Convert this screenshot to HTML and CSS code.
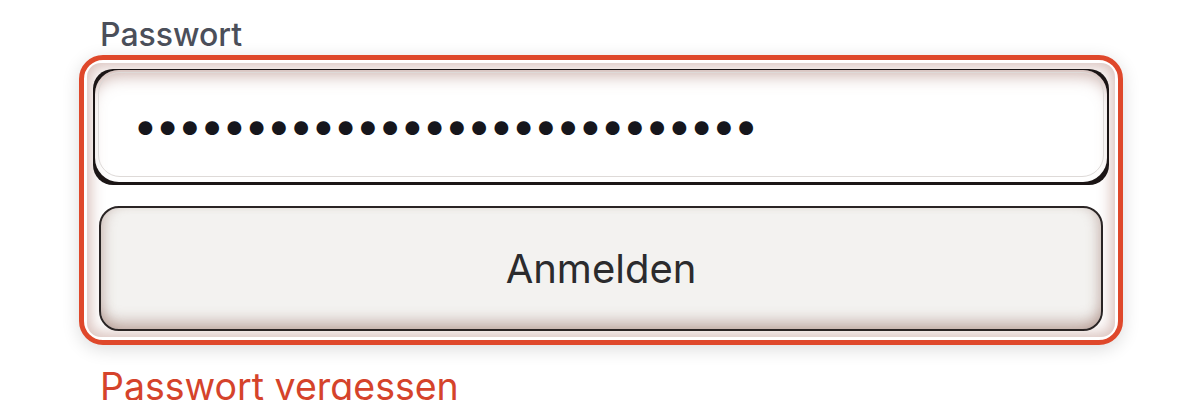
FILE: index.html
```html
<!DOCTYPE html>
<html lang="de">
<head>
<meta charset="utf-8">
<title>Login</title>
<link rel="stylesheet" href="styles.css">
</head>
<body>
<form class="form">
  <label class="label" for="pw">Passwort</label>
  <div class="group">
    <div class="panel">
      <div class="field">
        <div class="field-inner">
          <input id="pw" class="input" type="password" value="abcdefghijklmnopqrstuvwxyzab">
        </div>
      </div>
      <button type="button" class="button">Anmelden</button>
    </div>
  </div>
  <a class="link" href="#">Passwort vergessen</a>
</form>
</body>
</html>
```

FILE: styles.css
```css
* { box-sizing: border-box; }
html, body { margin: 0; background: #ffffff; }
body { font-family: Inter, "Noto Sans", sans-serif; overflow: hidden; height: 400px; }

.form {
  display: flex;
  flex-direction: column;
  width: 1044px;
  margin-left: 79px;
  padding-top: 15px;
}

.label {
  font-size: 32px;
  line-height: 40px;
  font-weight: 500;
  color: #4b4f5a;
  margin-left: 21px;
}

.group {
  border: 5.5px solid #df482b;
  border-radius: 24px;
  padding: 3px;
  background: #ffffff;
  box-shadow: 0 4px 18px rgba(0, 0, 0, 0.14);
}

.panel {
  display: flex;
  flex-direction: column;
  gap: 21px;
  padding: 6px;
  border-radius: 14px;
  background: #ffffff;
  box-shadow: inset 0 0 14px 4px rgba(175, 125, 115, 0.48);
}

.field {
  background: #1b1515;
  border-radius: 20px;
  padding: 1px 2px 3px 2px;
  height: 116px;
}

.field-inner {
  height: 100%;
  background: #ffffff;
  border-radius: 24px;
  padding: 2px 3px 5px 3px;
  box-shadow: inset 0 12px 16px -6px rgba(160, 110, 100, 0.5);
}

.input {
  display: block;
  width: 100%;
  height: 100%;
  border: 1.5px solid #dedad8;
  border-radius: 22px;
  background: transparent;
  padding: 0 0 0 34px;
  font-family: Inter, sans-serif;
  font-size: 44px;
  letter-spacing: -2.5px;
  color: #16161c;
  outline: none;
}

.button {
  margin: 0 6px;
  height: 125px;
  border: 2px solid #2a2424;
  border-radius: 20px;
  background: #f3f2f0;
  box-shadow: inset 0 -14px 14px -6px rgba(150, 110, 100, 0.45), inset 10px 0 12px -6px rgba(150, 110, 100, 0.3), inset -10px 0 12px -6px rgba(150, 110, 100, 0.3);
  font-family: Inter, sans-serif;
  font-size: 40px;
  color: #2b2b2d;
  padding: 0;
}

.link {
  margin-top: 20px;
  margin-left: 21px;
  font-size: 37.5px;
  line-height: 44px;
  color: #d5432b;
  text-decoration: none;
}
```
